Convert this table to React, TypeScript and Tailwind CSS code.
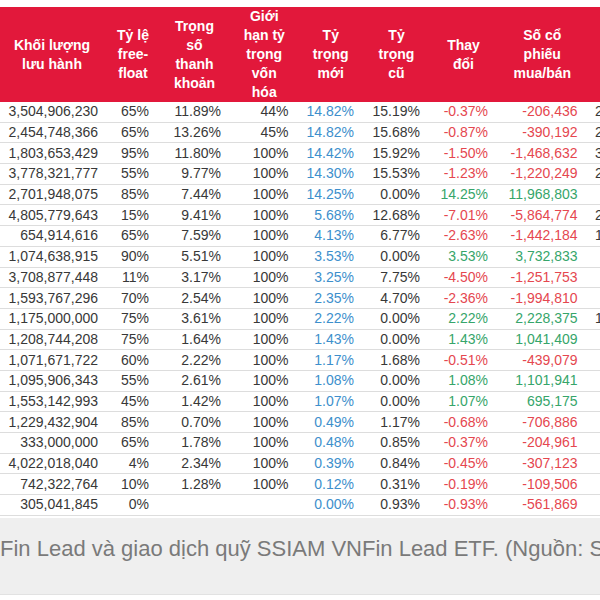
import React from "react";

type Tone = "d" | "b" | "r" | "g";

const widths = [111, 51, 72, 67.5, 65.5, 66, 68, 89.5, 90];

const headers: string[][] = [
  ["Khối lượng", "lưu hành"],
  ["Tỷ lệ", "free-", "float"],
  ["Trọng", "số", "thanh", "khoản"],
  ["Giới", "hạn tỷ", "trọng", "vốn", "hóa"],
  ["Tỷ", "trọng", "mới"],
  ["Tỷ", "trọng", "cũ"],
  ["Thay", "đổi"],
  ["Số cổ", "phiếu", "mua/bán"],
  [],
];

const rows: [string, string, string, string, string, string, string, string, string][] = [
  ["3,504,906,230", "65%", "11.89%", "44%", "14.82%", "15.19%", "-0.37%", "-206,436", "2,915"],
  ["2,454,748,366", "65%", "13.26%", "45%", "14.82%", "15.68%", "-0.87%", "-390,192", "2,064"],
  ["1,803,653,429", "95%", "11.80%", "100%", "14.42%", "15.92%", "-1.50%", "-1,468,632", "3,126"],
  ["3,778,321,777", "55%", "9.77%", "100%", "14.30%", "15.53%", "-1.23%", "-1,220,249", "2,498"],
  ["2,701,948,075", "85%", "7.44%", "100%", "14.25%", "0.00%", "14.25%", "11,968,803", ""],
  ["4,805,779,643", "15%", "9.41%", "100%", "5.68%", "12.68%", "-7.01%", "-5,864,774", "2,177"],
  ["654,914,616", "65%", "7.59%", "100%", "4.13%", "6.77%", "-2.63%", "-1,442,184", "1,368"],
  ["1,074,638,915", "90%", "5.51%", "100%", "3.53%", "0.00%", "3.53%", "3,732,833", ""],
  ["3,708,877,448", "11%", "3.17%", "100%", "3.25%", "7.75%", "-4.50%", "-1,251,753", ""],
  ["1,593,767,296", "70%", "2.54%", "100%", "2.35%", "4.70%", "-2.36%", "-1,994,810", ""],
  ["1,175,000,000", "75%", "3.61%", "100%", "2.22%", "0.00%", "2.22%", "2,228,375", "1,257"],
  ["1,208,744,208", "75%", "1.64%", "100%", "1.43%", "0.00%", "1.43%", "1,041,409", ""],
  ["1,071,671,722", "60%", "2.22%", "100%", "1.17%", "1.68%", "-0.51%", "-439,079", ""],
  ["1,095,906,343", "55%", "2.61%", "100%", "1.08%", "0.00%", "1.08%", "1,101,941", ""],
  ["1,553,142,993", "45%", "1.42%", "100%", "1.07%", "0.00%", "1.07%", "695,175", ""],
  ["1,229,432,904", "85%", "0.70%", "100%", "0.49%", "1.17%", "-0.68%", "-706,886", ""],
  ["333,000,000", "65%", "1.78%", "100%", "0.48%", "0.85%", "-0.37%", "-204,961", ""],
  ["4,022,018,040", "4%", "2.34%", "100%", "0.39%", "0.84%", "-0.45%", "-307,123", ""],
  ["742,322,764", "10%", "1.28%", "100%", "0.12%", "0.31%", "-0.19%", "-109,506", ""],
  ["305,041,845", "0%", "", "", "0.00%", "0.93%", "-0.93%", "-561,869", ""],
];

function toneClass(t: Tone) {
  if (t === "b") return "text-[#3d8fcc]";
  if (t === "r") return "text-[#e5474f]";
  if (t === "g") return "text-[#36a56a]";
  return "text-[#383838]";
}

export default function App() {
  return (
    <div
      className="w-[600px] h-[600px] bg-white overflow-hidden"
      style={{ fontFamily: '"Liberation Sans", Arial, sans-serif' }}
    >
      <div className="pt-[7px] ml-[-3.5px] w-[720px]">
        <div className="flex h-[95px] bg-[#e2183b] text-white font-bold text-[14px] leading-[19px]">
          {headers.map((lines, i) => (
            <div
              key={i}
              className="flex flex-col items-center justify-center text-center px-[9.5px] shrink-0"
              style={{ width: widths[i] }}
            >
              {lines.map((l, j) => (
                <div key={j} className="whitespace-nowrap">
                  {l}
                </div>
              ))}
            </div>
          ))}
        </div>
        {rows.map((r, ri) => {
          const neg = r[6].startsWith("-");
          return (
            <div
              key={ri}
              className="flex h-[20.7px] items-center border-b border-[#dddddd] text-[14px] leading-[19px]"
            >
              {r.map((v, ci) => {
                let tone: Tone = "d";
                if (ci === 4) tone = "b";
                if (ci === 6 || ci === 7) tone = neg ? "r" : "g";
                const last = ci === 8;
                return (
                  <div
                    key={ci}
                    className={
                      (last ? "text-left pl-[8px] " : "text-right pr-[9.5px] ") +
                      "shrink-0 whitespace-nowrap " +
                      toneClass(tone)
                    }
                    style={{ width: widths[ci] }}
                  >
                    {v}
                  </div>
                );
              })}
            </div>
          );
        })}
      </div>
      <div className="mt-[2px] h-[77px] bg-[#efefef] border-b border-[#e2e2e2] overflow-hidden">
        <div className="pt-[18px] text-[22px] leading-[26px] text-[#7a7a7a] whitespace-nowrap">
          Fin Lead và giao dịch quỹ SSIAM VNFin Lead ETF. (Nguồn: SSI Research)
        </div>
      </div>
    </div>
  );
}
